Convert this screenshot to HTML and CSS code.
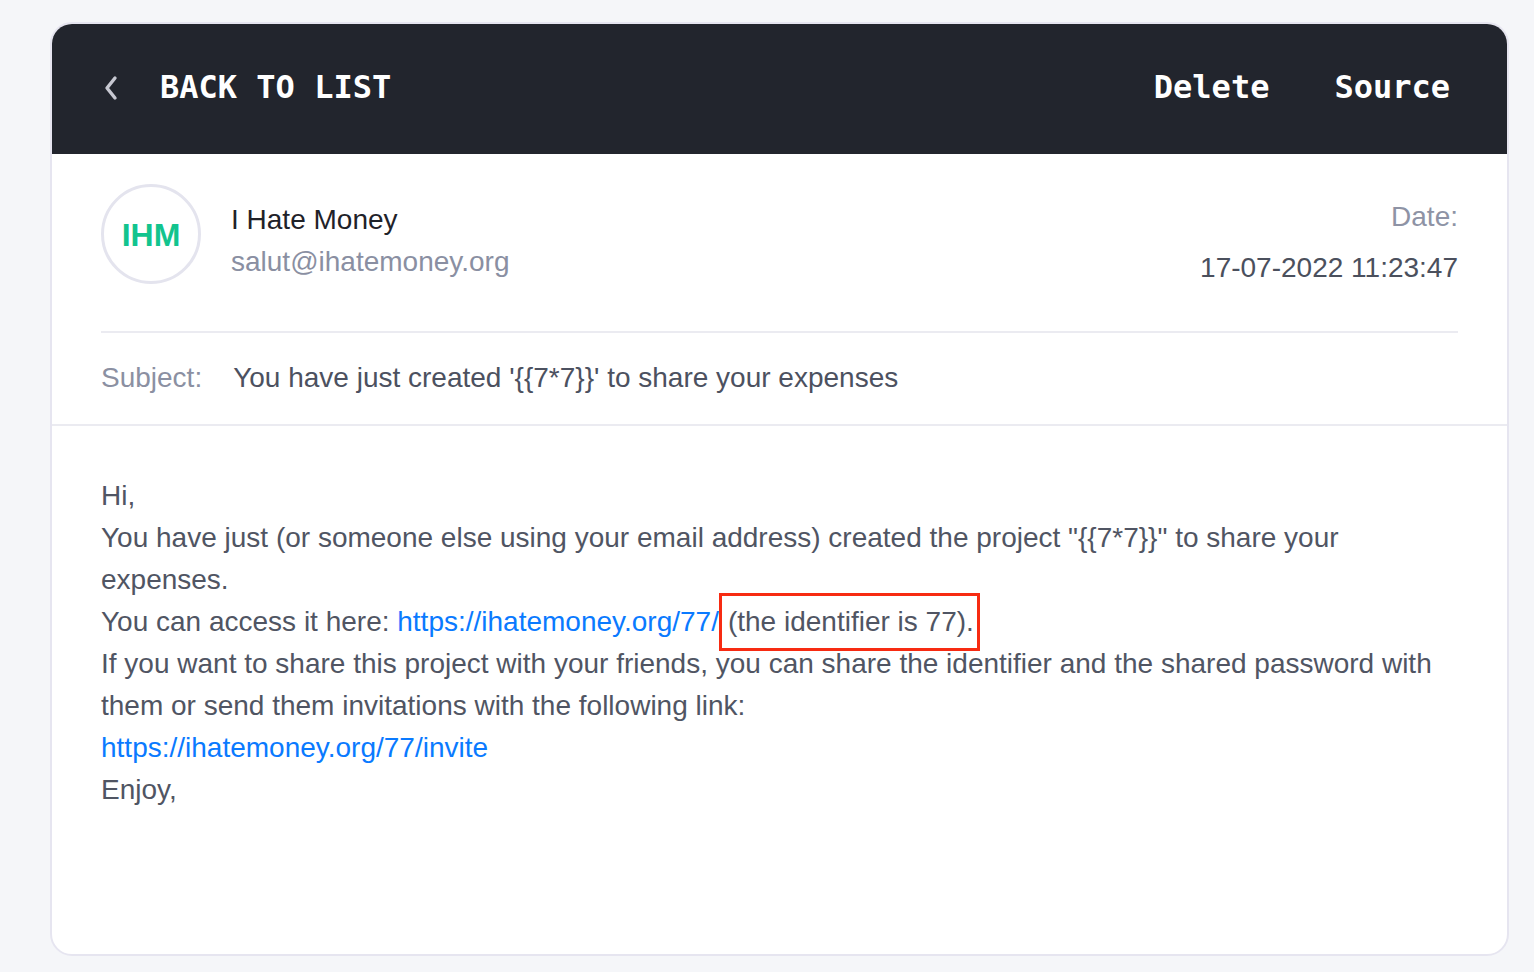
FILE: index.html
```html
<!DOCTYPE html>
<html lang="en">
<head>
<meta charset="utf-8">
<title>Email</title>
<link rel="stylesheet" href="styles.css">
</head>
<body>
<div class="card">
  <header class="topbar">
    <a class="back" href="#">
      <svg class="chev" width="16" height="26" viewBox="0 0 16 26" aria-hidden="true"><path d="M12 3 L4 13 L12 23" fill="none" stroke="#c7c8d1" stroke-width="3.4" stroke-linecap="round" stroke-linejoin="round"/></svg>
      <span>BACK TO LIST</span>
    </a>
    <nav class="actions">
      <a href="#">Delete</a>
      <a href="#">Source</a>
    </nav>
  </header>
  <section class="meta">
    <div class="sender">
      <div class="avatar">IHM</div>
      <div class="who">
        <div class="name">I Hate Money</div>
        <div class="addr">salut@ihatemoney.org</div>
      </div>
      <div class="date">
        <div class="date-label">Date:</div>
        <div class="date-value">17-07-2022 11:23:47</div>
      </div>
    </div>
    <div class="subject">
      <span class="subject-label">Subject:</span>
      <span class="subject-text">You have just created '{{7*7}}' to share your expenses</span>
    </div>
  </section>
  <main class="body">
    <p>Hi,<br>
    You have just (or someone else using your email address) created the project "{{7*7}}" to share your expenses.<br>
    You can access it here: <a href="#">https://ihatemoney.org/77/</a><span class="hl">(the identifier is 77).</span><br>
    If you want to share this project with your friends, you can share the identifier and the shared password with them or send them invitations with the following link:<br>
    <a href="#">https://ihatemoney.org/77/invite</a><br>
    Enjoy,</p>
  </main>
</div>
</body>
</html>
```
FILE: styles.css
```css
html, body {
  margin: 0;
  padding: 0;
}
body {
  background: #f5f6f9;
  font-family: "Liberation Sans", Arial, sans-serif;
  padding: 22px 0 0 50px;
}
.card {
  box-sizing: border-box;
  width: 1459px;
  height: 934px;
  background: #fff;
  border: 2px solid #e6e5f0;
  border-radius: 22px;
  overflow: hidden;
}
.topbar {
  height: 130px;
  background: #22252d;
  display: flex;
  align-items: center;
  justify-content: space-between;
  padding: 0 57px 4px 51px;
  box-sizing: border-box;
  font-family: "DejaVu Sans Mono", monospace;
  font-weight: bold;
  font-size: 32px;
  color: #fff;
}
.topbar a {
  color: #fff;
  text-decoration: none;
}
.back {
  display: flex;
  align-items: center;
  gap: 41px;
}
.chev {
  display: block;
  margin-top: 2px;
}
.actions {
  display: flex;
  gap: 65px;
}
.meta {
  padding: 0 49px;
  border-bottom: 2px solid #ebebf1;
}
.sender {
  display: flex;
  align-items: flex-start;
  padding: 30px 0 42px;
  border-bottom: 2px solid #ebebf1;
}
.avatar {
  box-sizing: border-box;
  width: 100px;
  height: 100px;
  border: 3px solid #e4e4ee;
  border-radius: 50%;
  display: flex;
  align-items: center;
  justify-content: center;
  color: #12c48e;
  font-weight: bold;
  font-size: 32px;
  padding-top: 2px;
}
.who {
  margin-left: 30px;
  margin-top: 15px;
  font-size: 28px;
  line-height: 42px;
}
.name {
  color: #1f2229;
}
.addr {
  color: #8a8fa2;
}
.date {
  margin-left: auto;
  text-align: right;
  font-size: 28px;
  line-height: 42px;
  margin-top: 12px;
}
.date-label {
  color: #8e93a5;
}
.date-value {
  color: #4b505d;
  margin-top: 9px;
}
.subject {
  display: flex;
  gap: 31px;
  font-size: 28px;
  line-height: 42px;
  padding: 24px 0 25px;
}
.subject-label {
  color: #8b90a2;
}
.subject-text {
  color: #4c5160;
}
.body {
  padding: 49px 49px 0;
}
.body p {
  margin: 0;
  font-size: 28px;
  line-height: 42px;
  color: #505563;
}
.body a {
  color: #0a7aff;
  text-decoration: none;
}
.hl {
  border: 3px solid #f72b12;
  padding: 10px 3px 11px 6px;
}
```
